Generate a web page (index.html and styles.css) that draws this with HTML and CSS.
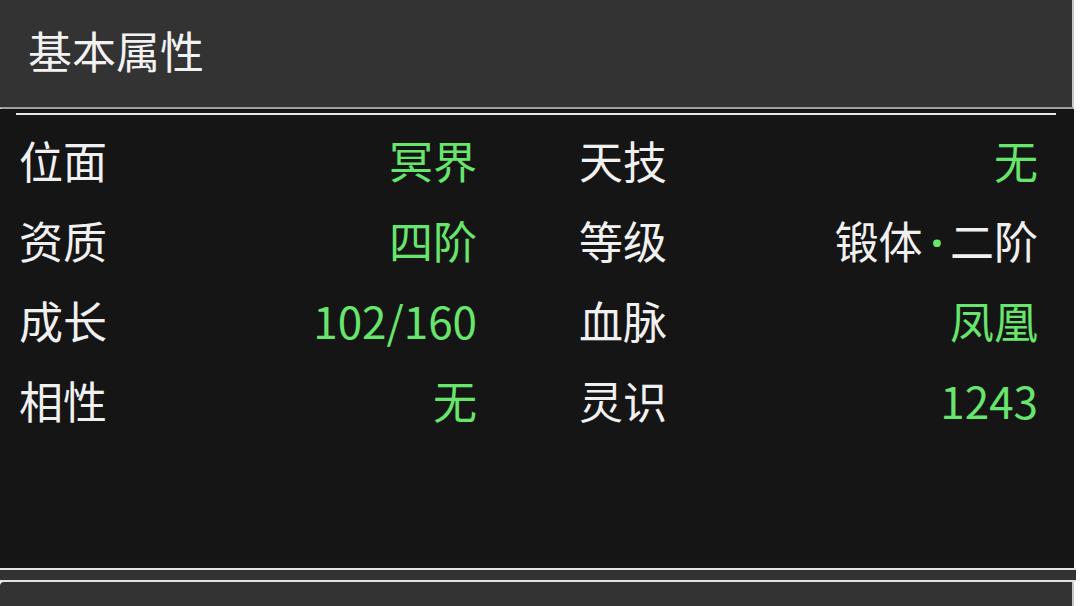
FILE: index.html
```html
<!DOCTYPE html>
<html lang="zh">
<head>
<meta charset="utf-8">
<link rel="stylesheet" href="styles.css">
</head>
<body>
<div class="header"><span class="title">基本属性</span></div>
<div class="panel">
  <div class="divider"></div>
  <div class="grid">
    <div class="cell"><span class="label">位面</span><span class="val green">冥界</span></div>
    <div class="cell"><span class="label">天技</span><span class="val green">无</span></div>
    <div class="cell"><span class="label">资质</span><span class="val green">四阶</span></div>
    <div class="cell"><span class="label">等级</span><span class="val">锻体<span class="dot">·</span>二阶</span></div>
    <div class="cell"><span class="label">成长</span><span class="val green">102/160</span></div>
    <div class="cell"><span class="label">血脉</span><span class="val green">凤凰</span></div>
    <div class="cell"><span class="label">相性</span><span class="val green">无</span></div>
    <div class="cell"><span class="label">灵识</span><span class="val green">1243</span></div>
  </div>
</div>
<div class="line"></div>
<div class="band"></div>
<div class="line"></div>
<div class="next"></div>
</body>
</html>
```

FILE: styles.css
```css
html, body {
  margin: 0;
  padding: 0;
  background: #ffffff;
  font-family: "Noto Sans CJK SC", "Noto Sans", sans-serif;
  overflow: hidden;
}
.header {
  box-sizing: border-box;
  width: 1074px;
  height: 109px;
  background: #333333;
  border-right: 2px solid #c8c8c8;
  border-bottom: 2px solid #a0a0a0;
  border-bottom-left-radius: 2px;
  display: flex;
  align-items: center;
  padding-left: 28px;
  padding-bottom: 8px;
}
.title {
  color: #f2f2f2;
  font-size: 44px;
  line-height: 1;
}
.panel {
  box-sizing: border-box;
  width: 1074px;
  height: 459px;
  background: #151515;
  padding-top: 4px;
}
.divider {
  margin-left: 16px;
  width: 1040px;
  height: 2px;
  background: #e8e8e8;
}
.grid {
  display: grid;
  grid-template-columns: 458px 459px;
  column-gap: 102px;
  padding-left: 19px;
  padding-top: 5px;
}
.cell {
  display: flex;
  justify-content: space-between;
  height: 80px;
  line-height: 80px;
  font-size: 44px;
  color: #f0f0f0;
  white-space: nowrap;
}
.green {
  color: #68e56d;
}
.dot {
  color: #68e56d;
  font-family: "Noto Sans", sans-serif;
  font-size: 44px;
  font-weight: bold;
  margin: 0 7px 0 8px;
}
.line {
  width: 1076px;
  height: 2px;
  background: #e4e4e4;
}
.band {
  width: 1076px;
  height: 10px;
  background: #333333;
}
.next {
  box-sizing: border-box;
  width: 1074px;
  height: 30px;
  background: #333333;
  border-right: 2px solid #c8c8c8;
  border-top-left-radius: 4px;
}
```
